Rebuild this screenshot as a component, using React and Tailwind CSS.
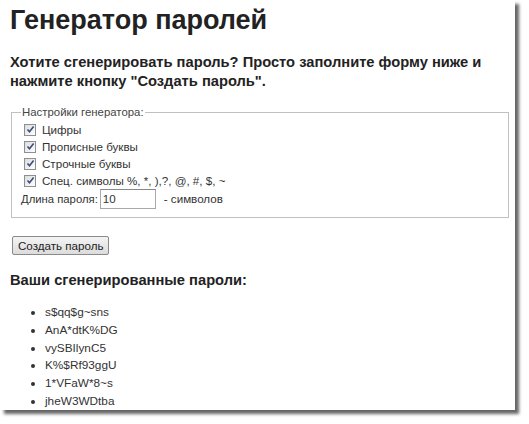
import React from "react";

function Check() {
  return (
    <span className="inline-flex items-center justify-center w-[12px] h-[12px] border border-[#8e8f8f] bg-gradient-to-br from-[#dcdcdc] to-[#ffffff] shrink-0">
      <svg width="9" height="9" viewBox="0 0 9 9">
        <path d="M1.5 4.5 L3.5 6.8 L7.6 1.6" fill="none" stroke="#3b4f7a" strokeWidth="1.6" />
      </svg>
    </span>
  );
}

export default function App() {
  const opts = ["Цифры", "Прописные буквы", "Строчные буквы", "Спец. символы %, *, ),?, @, #, $, ~"];
  const pw = ["s$qq$g~sns", "AnA*dtK%DG", "vySBIlynC5", "K%$Rf93ggU", "1*VFaW*8~s", "jheW3WDtba"];
  return (
    <div className="w-[529px] h-[424px] bg-white font-['Liberation_Sans',Arial,sans-serif] text-[#222]">
      <div className="w-[515px] h-[410px] bg-white shadow-[4px_4px_3px_rgba(0,0,0,0.6)] pl-[10px] pt-[4px]">
        <h1 className="text-[27px] font-bold leading-[32px] text-[#222]">Генератор паролей</h1>
        <p className="mt-[17px] text-[14.7px] font-bold leading-[19px] text-[#222]">
          Хотите сгенерировать пароль? Просто заполните форму ниже и<br />нажмите кнопку "Создать пароль".
        </p>
        <fieldset className="mt-[14px] ml-[1px] w-[498px] h-[113px] border border-[#c0c0c0] px-[10px] pb-[8px] text-[11.6px] text-[#333]">
          <legend className="px-[1px] text-[11.4px] leading-[14px] text-[#444] -ml-[1px]">Настройки генератора:</legend>
          <div className="flex flex-col pl-[2px] pt-[2px]">
            {opts.map((o) => (
              <div key={o} className="flex items-center gap-[6px] h-[17px]">
                <Check />
                <span>{o}</span>
              </div>
            ))}
          </div>
          <div className="flex items-center h-[20px] mt-0 -ml-[1px] text-[11.3px]">
            <span>Длина пароля:</span>
            <span className="ml-[2px] w-[56px] h-[20px] border border-[#a9a9a9] border-t-[#888] flex items-center pl-[2px] text-[11.6px]">10</span>
            <span className="ml-[8px] text-[11.6px]">- символов</span>
          </div>
        </fieldset>
        <div className="mt-[15px] ml-[2px]">
          <span className="inline-flex items-center h-[19px] px-[5px] border border-[#8a8a8a] rounded-[2px] bg-gradient-to-b from-[#f4f4f4] to-[#dcdcdc] text-[11.6px] text-[#222]">Создать пароль</span>
        </div>
        <h3 className="mt-[14px] text-[14.7px] font-bold leading-[19px] text-[#222]">Ваши сгенерированные пароли:</h3>
        <ul className="mt-[14px] pl-[35px] list-disc text-[11.8px] text-[#333]">
          {pw.map((p) => (
            <li key={p} className="leading-[17.8px]">{p}</li>
          ))}
        </ul>
      </div>
    </div>
  );
}
